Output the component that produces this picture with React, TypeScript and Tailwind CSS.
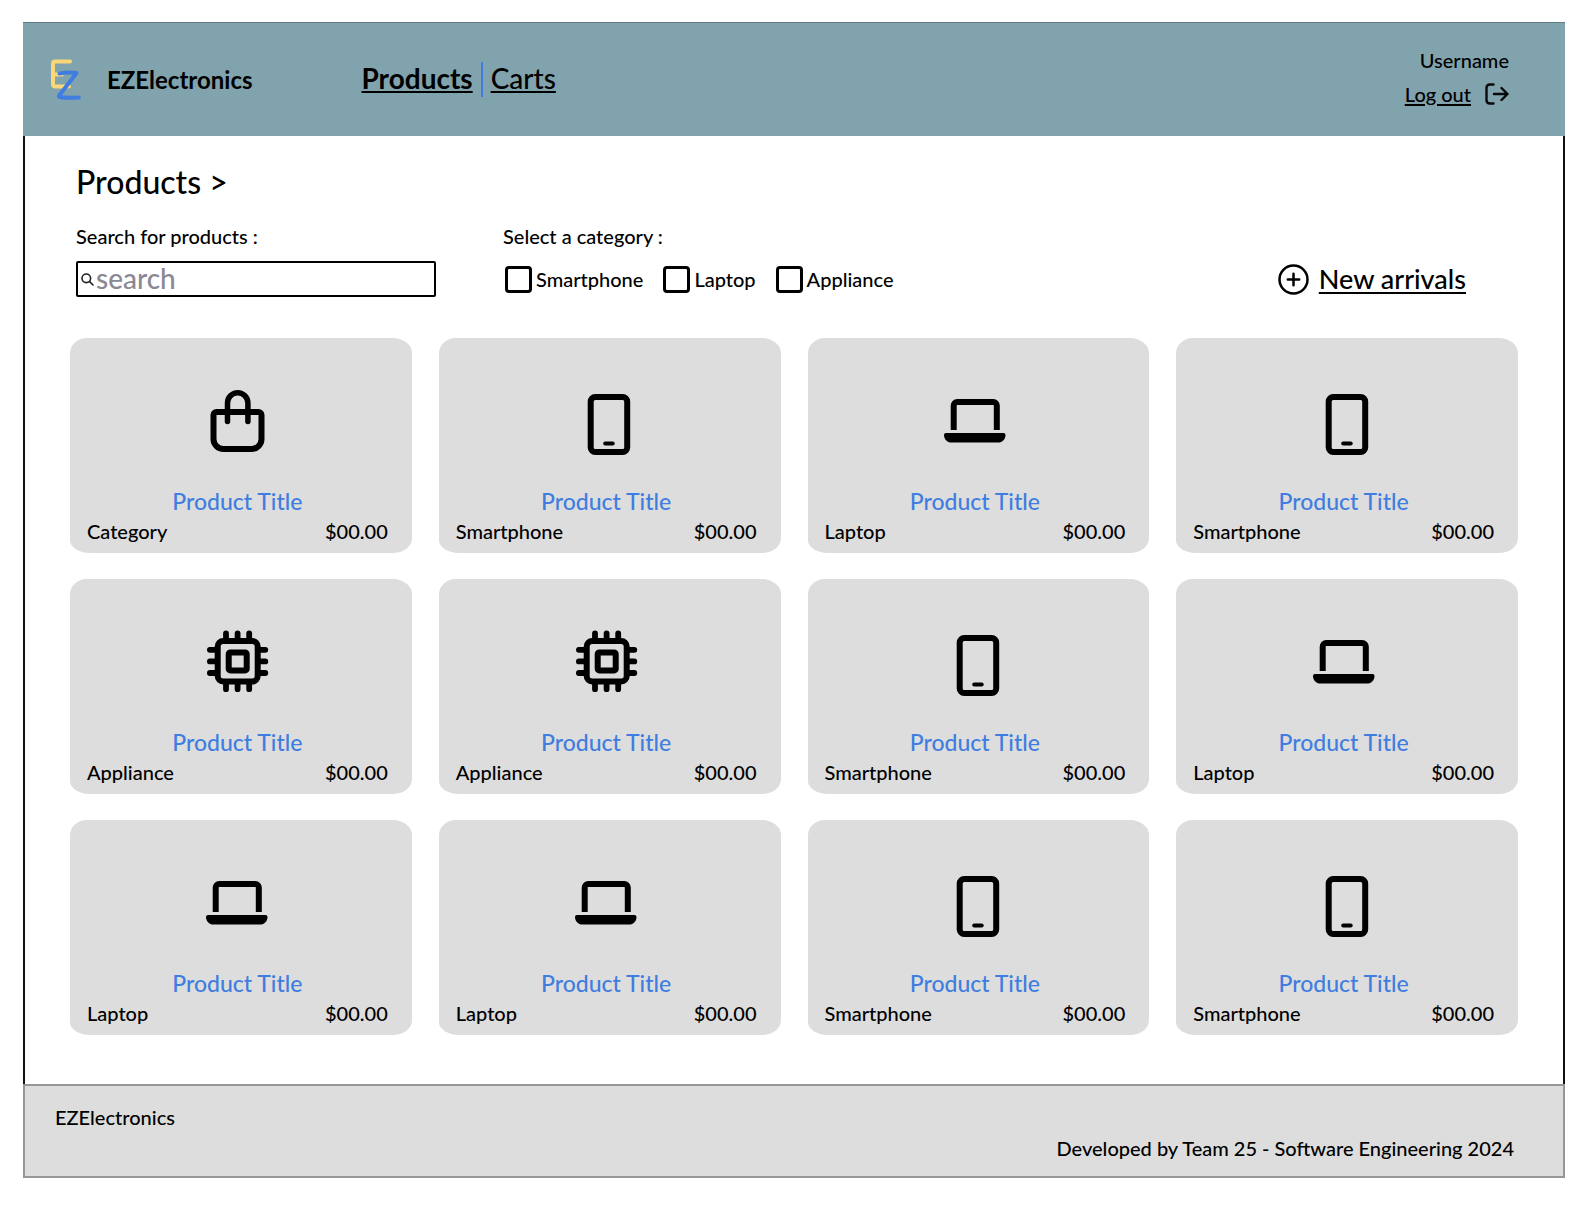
type Kind = "bag" | "phone" | "laptop" | "chip";

interface Product {
  icon: Kind;
  category: string;
}

const smartphone: Product = { icon: "phone", category: "Smartphone" };
const laptop: Product = { icon: "laptop", category: "Laptop" };
const appliance: Product = { icon: "chip", category: "Appliance" };

const products: Product[] = [
  { icon: "bag", category: "Category" },
  smartphone,
  laptop,
  smartphone,
  appliance,
  appliance,
  smartphone,
  laptop,
  laptop,
  laptop,
  smartphone,
  smartphone,
];

const categories = ["Smartphone", "Laptop", "Appliance"];

function Logo() {
  return (
    <svg viewBox="0 0 32 44" className="h-11 w-8 shrink-0" fill="none" strokeWidth="4" strokeLinecap="round" strokeLinejoin="round" aria-hidden="true">
      <path d="M20 3.6H5Q3 3.6 3 6V26Q3 28.4 5 28.4H19M3 16.5H12" stroke="#fbd877" />
      <path d="M9.5 15.6Q18 14 26.6 15L9.2 37.4Q8.4 39 10 39Q18 40.5 28.8 39.4" stroke="#3f7de0" />
    </svg>
  );
}

function ProductIcon({ kind }: { kind: Kind }) {
  return (
    <svg viewBox="0 0 66 70" className="h-[70px] w-[66px]" fill="none" stroke="#000" strokeWidth="6" aria-hidden="true">
      {kind === "bag" && (
        <>
          <path d="M12.5 24H54.5a3 3 0 0 1 3 3V51a10 10 0 0 1-10 10H19.5a10 10 0 0 1-10-10V27a3 3 0 0 1 3-3Z" />
          <path d="M23.5 33.5V15a10.2 10.2 0 0 1 20.4 0V33.5" strokeWidth="5.5" strokeLinecap="round" />
        </>
      )}
      {kind === "phone" && (
        <>
          <rect x="17.7" y="9" width="36.5" height="55" rx="4.5" />
          <path d="M32.2 55.6H39.7" strokeWidth="4" strokeLinecap="round" />
        </>
      )}
      {kind === "laptop" && (
        <>
          <path d="M11.7 42V17.5a3.5 3.5 0 0 1 3.5-3.5H51.3a3.5 3.5 0 0 1 3.5 3.5V42" />
          <path d="M2 47Q2 45 4 45H61.5Q63.5 45 63.5 47C63.5 51 60.5 54.6 56 54.6H9.5C5 54.6 2 51 2 47Z" fill="#000" stroke="none" />
        </>
      )}
      {kind === "chip" && (
        <>
          <rect x="13.7" y="12" width="40" height="40.6" rx="5.5" strokeWidth="6" />
          <rect x="24.7" y="23.4" width="18" height="18" rx="1.5" strokeWidth="6" />
          <path
            d="M22 4.3V10M33.6 4.3V10M45.2 4.3V10M22 55V60.2M33.6 55V60.2M45.2 55V60.2M5.9 20.8H12M5.9 32.4H12M5.9 44H12M55.5 20.8H61.3M55.5 32.4H61.3M55.5 44H61.3"
            strokeWidth="5.8"
            strokeLinecap="round"
          />
        </>
      )}
    </svg>
  );
}

function ProductCard({ icon, category }: Product) {
  return (
    <article className="flex flex-col items-center rounded-[17px_19px_18px_20px/15px_15px_15px_13px] bg-[#dddddd] pt-[50px] pr-6 pb-2 pl-[17px]">
      <ProductIcon kind={icon} />
      <h2 className="mt-[27px] text-[23px] leading-8">
        <a href="#product" className="text-[#3f7de0]">
          Product Title
        </a>
      </h2>
      <div className="flex w-full justify-between text-xl leading-7">
        <span>{category}</span>
        <span>$00.00</span>
      </div>
    </article>
  );
}

export default function App() {
  return (
    <div className="min-h-screen bg-white pt-[22px] pr-[21px] pb-8 pl-[23px] font-['Lato',sans-serif] font-medium text-black">
      <header className="flex min-h-[114px] items-center border-t border-[#5f7d85] bg-[#80a3ad] pr-14 pl-[27px]">
        <Logo />
        <span className="ml-[25px] text-2xl font-bold">EZElectronics</span>
        <nav className="ml-[109px] flex items-center text-[28px] leading-8">
          <a href="#products" className="pb-1 font-bold underline decoration-2 underline-offset-2">
            Products
          </a>
          <span className="mx-2 h-[35px] w-0.5 bg-[#3f7de0]" />
          <a href="#carts" className="pb-1 underline decoration-2 underline-offset-2">
            Carts
          </a>
        </nav>
        <div className="ml-auto flex flex-col items-end pb-1.5 text-xl leading-[34px]">
          <span>Username</span>
          <button type="button" className="flex items-center gap-3.5">
            <span className="underline decoration-2 underline-offset-2">Log out</span>
            <svg viewBox="0 0 24 22" className="h-[22px] w-6" fill="none" stroke="#0a0a0a" strokeWidth="2.4" strokeLinecap="round" strokeLinejoin="round" aria-hidden="true">
              <path d="M8.5 1.5H5Q1.5 1.5 1.5 5V17Q1.5 20.5 5 20.5H8.5M9 11H22.5M16.5 5L22.5 11L16.5 17" />
            </svg>
          </button>
        </div>
      </header>

      <main className="border-x-2 border-[#111111] px-[45px] pt-[26px] pb-[49px]">
        <h1 className="pl-1.5 text-[32px] leading-10">Products &gt;</h1>

        <div className="mt-5 flex flex-wrap items-end pr-[52px] pl-1.5">
          <div className="flex flex-col gap-[11px]">
            <label htmlFor="search" className="text-xl leading-7">
              Search for products :
            </label>
            <div className="flex h-9 w-[360px] items-center gap-0.5 rounded-xs border-2 border-black pl-[3px]">
              <svg viewBox="0 0 13 13" className="size-[13px] shrink-0" fill="none" stroke="#222222" strokeWidth="1.6" strokeLinecap="round" aria-hidden="true">
                <circle cx="5.3" cy="5.3" r="4.3" />
                <path d="M8.6 8.6L12 12" />
              </svg>
              <input id="search" type="text" placeholder="search" className="w-full min-w-0 bg-transparent pb-0.5 text-[28px] leading-8 outline-none placeholder:text-[#8a8893]" />
            </div>
          </div>

          <fieldset className="ml-[67px]">
            <legend className="text-xl leading-7">Select a category :</legend>
            <div className="mt-[11px] flex h-9 items-center gap-5 pl-0.5">
              {categories.map((name) => (
                <label key={name} className="flex items-center gap-1 text-xl leading-7">
                  <input type="checkbox" className="size-[27px] appearance-none rounded-sm border-[3px] border-black bg-white checked:bg-black" />
                  {name}
                </label>
              ))}
            </div>
          </fieldset>

          <a href="#new" className="ml-auto flex h-9 items-center gap-2.5 text-[27px] leading-8">
            <svg viewBox="0 0 31 31" className="size-[31px]" fill="none" stroke="#000" strokeWidth="2.5" strokeLinecap="round" aria-hidden="true">
              <circle cx="15.5" cy="15.5" r="14" />
              <path d="M15.5 9.8V21.2M9.8 15.5H21.2" />
            </svg>
            <span className="underline decoration-2 underline-offset-3">New arrivals</span>
          </a>
        </div>

        <section aria-label="Product list" className="mt-[41px] grid grid-cols-4 gap-x-[27px] gap-y-[26px]">
          {products.map((product, index) => (
            <ProductCard key={index} {...product} />
          ))}
        </section>
      </main>

      <footer className="flex flex-col gap-[3px] border-2 border-[#969696] bg-[#dddddd] pt-[17px] pr-[49px] pb-3.5 pl-[30px] text-xl leading-7">
        <span>EZElectronics</span>
        <span className="self-end">Developed by Team 25 - Software Engineering 2024</span>
      </footer>
    </div>
  );
}
